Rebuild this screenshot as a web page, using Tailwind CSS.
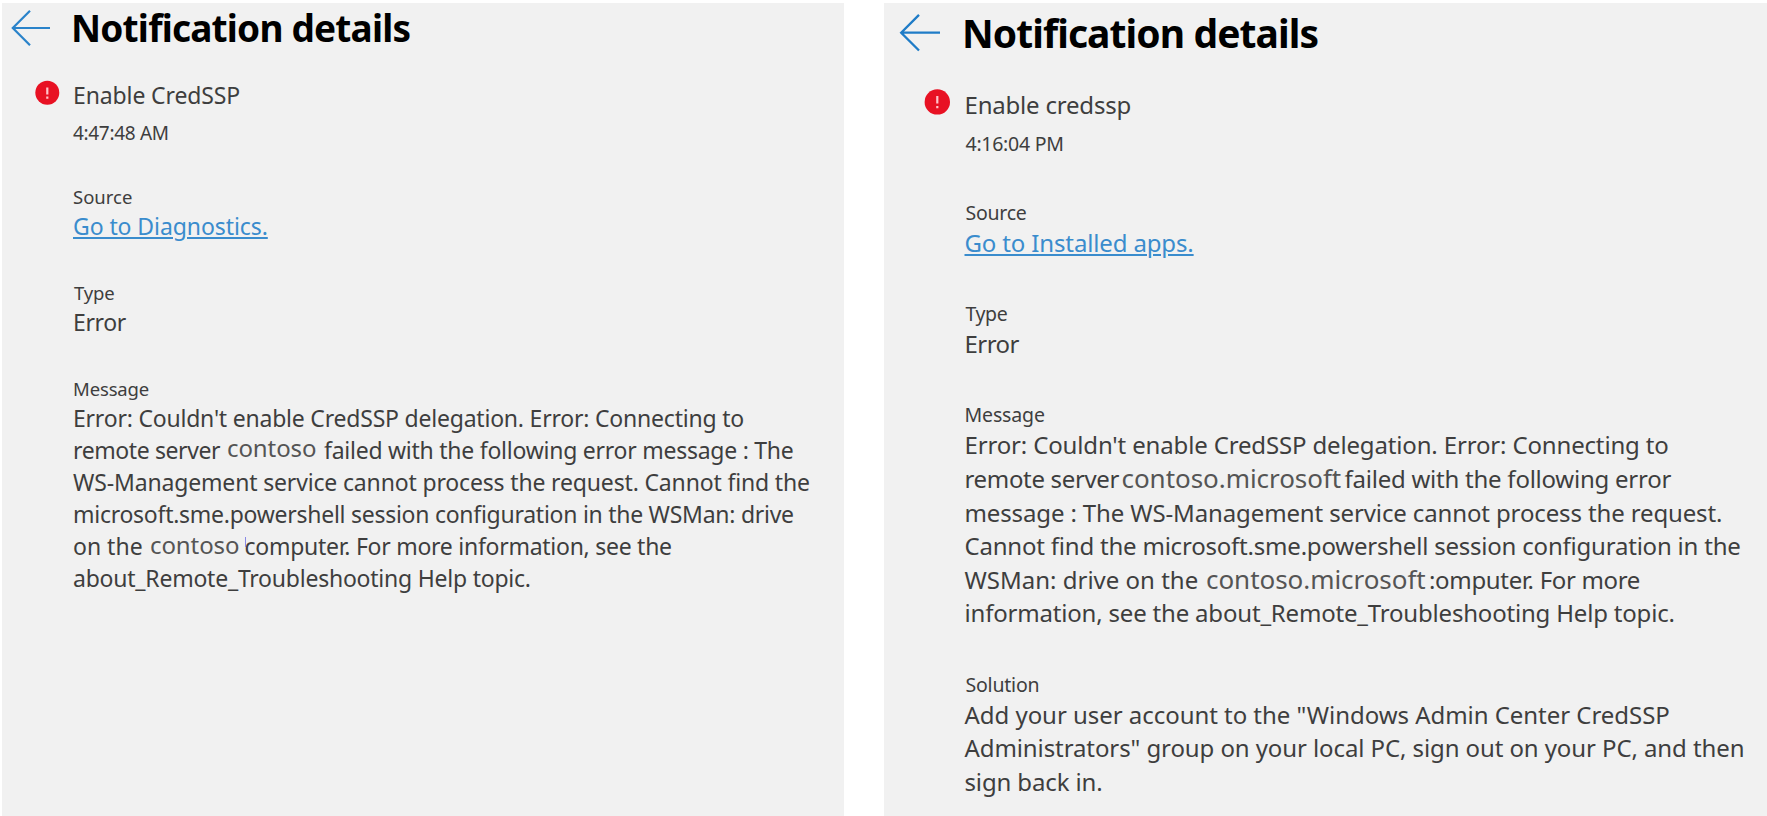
<!DOCTYPE html>
<html lang="en">
<head>
<meta charset="utf-8">
<title>Notification details</title>
<script src="https://cdn.jsdelivr.net/npm/@tailwindcss/browser@4"></script>
</head>
<body class="bg-white">
<main class="flex h-[816px] w-[1767px] justify-between overflow-hidden pl-[2px] pt-[3px] font-['Noto_Sans',sans-serif] text-[#3e3e3e] whitespace-nowrap">

  <section class="h-[813px] w-[842px] bg-[#f1f1f1] pt-px">
    <header class="flex h-12 pl-[9px]">
      <svg class="mt-[5px] h-[38px] w-[42px] shrink-0" viewBox="0 0 42 38" fill="none" stroke="#2a83ca" stroke-width="2.2"><path d="M39 19H2M19 1.800L1.800 19L19 36.200"/></svg>
      <h1 class="ml-[18px] text-[37px] leading-[48px] font-bold tracking-[-0.8px] text-black">Notification details</h1>
    </header>
    <div class="flex pt-[27px] pl-[33px]">
      <svg class="mt-px h-[25px] w-[25px] shrink-0" viewBox="0 0 25 25"><circle cx="12.300" cy="12.700" r="12" fill="#e81123"/><path d="M12.300 7.500v7M12.300 16.500v2.200" stroke="#ffc4ca" stroke-width="2.200"/></svg>
      <div class="ml-[13px] text-[23px] leading-[32px]">
        <p class="tracking-[-0.12px]">Enable CredSSP</p>
        <p class="mt-[9px] text-[19px] leading-[26px] tracking-[-0.32px]">4:47:48 AM</p>
        <dl class="mt-[38px] flex flex-col gap-[38px]">
          <div>
            <dt class="text-[18.5px] leading-[26px]">Source</dt>
            <dd><a class="text-[#3a8ccd] underline decoration-[1.5px] underline-offset-[2px] tracking-[-0.08px]">Go to Diagnostics.</a></dd>
          </div>
          <div>
            <dt class="pl-px text-[18.5px] leading-[26px] tracking-[-0.2px]">Type</dt>
            <dd class="tracking-[-0.4px]">Error</dd>
          </div>
          <div>
            <dt class="text-[18.5px] leading-[26px] tracking-[-0.15px]">Message</dt>
            <dd class="leading-[32.1px]">
              <div class="tracking-[-0.21px]">Error: Couldn't enable CredSSP delegation. Error: Connecting to</div>
              <div class="flex items-start">
                <span class="w-[154px] tracking-[-0.4px]">remote server</span>
                <span class="w-[97px] text-[24px] leading-[28px] text-[#555] tracking-[-0.1px]">contoso</span>
                <span class="tracking-[-0.25px]">failed with the following error message : The</span>
              </div>
              <div class="tracking-[-0.16px]">WS-Management service cannot process the request. Cannot find the</div>
              <div class="tracking-[-0.265px]">microsoft.sme.powershell session configuration in the WSMan: drive</div>
              <div class="flex items-start">
                <span class="w-[77px]">on the</span>
                <span class="w-[94.5px] text-[24px] leading-[29px] text-[#555] tracking-[-0.1px]">contoso</span>
                <span class="relative tracking-[-0.265px]"><i class="absolute top-[7px] left-[0.5px] h-[10px] w-px bg-[#8a8ae6]"></i>computer. For more information, see the</span>
              </div>
              <div class="tracking-[-0.23px]">about_Remote_Troubleshooting Help topic.</div>
            </dd>
          </div>
        </dl>
      </div>
    </div>
  </section>

  <section class="h-[813px] w-[883px] bg-[#f1f1f1] pt-[4px]">
    <header class="flex h-[50px] pl-[14px]">
      <svg class="mt-[6px] h-[40px] w-[42px] shrink-0" viewBox="0 0 42 40" fill="none" stroke="#1f7cc7" stroke-width="2.300"><path d="M42 19.700H3M21 1.900L3.200 19.700L21 37.500"/></svg>
      <h1 class="ml-[22px] pt-px text-[39px] leading-[50px] font-bold tracking-[-0.92px] text-black">Notification details</h1>
    </header>
    <div class="flex pt-[30.6px] pl-[40px]">
      <svg class="mt-[1.400px] h-[26px] w-[27px] shrink-0" viewBox="0 0 27 26"><circle cx="13.300" cy="12.900" r="12.700" fill="#e81123"/><path d="M13.300 7v7.500M13.300 17v2.200" stroke="#ffc4ca" stroke-width="2.200"/></svg>
      <div class="ml-[13.500px] text-[24px] leading-[33.6px]">
        <p class="tracking-[-0.2px]">Enable credssp</p>
        <p class="mt-[9.200px] pl-px text-[19.5px] leading-[27px] tracking-[-0.27px]">4:16:04 PM</p>
        <dl class="mt-[41.300px] flex flex-col gap-[40.6px]">
          <div>
            <dt class="pl-px text-[19.5px] leading-[27px] tracking-[-0.25px]">Source</dt>
            <dd><a class="text-[#3a8ccd] underline decoration-[1.5px] underline-offset-[2px] tracking-[-0.14px]">Go to Installed apps.</a></dd>
          </div>
          <div>
            <dt class="pl-px text-[19.5px] leading-[27px] tracking-[-0.4px]">Type</dt>
            <dd class="tracking-[-0.55px]">Error</dd>
          </div>
          <div>
            <dt class="text-[19.5px] leading-[27px] tracking-[-0.15px]">Message</dt>
            <dd class="pt-[0.4px]">
              <div class="tracking-[-0.155px]">Error: Couldn't enable CredSSP delegation. Error: Connecting to</div>
              <div class="flex items-start">
                <span class="w-[157px] tracking-[-0.33px]">remote server</span>
                <span class="w-[223px] text-[26px] leading-[33px] text-[#555] tracking-[-0.05px]">contoso.microsoft</span>
                <span class="tracking-[-0.24px]">failed with the following error</span>
              </div>
              <div class="tracking-[-0.13px]">message : The WS-Management service cannot process the request.</div>
              <div class="tracking-[-0.21px]">Cannot find the microsoft.sme.powershell session configuration in the</div>
              <div class="flex items-start">
                <span class="w-[241.5px]">WSMan: drive on the</span>
                <span class="w-[223px] text-[26px] leading-[33px] text-[#555] tracking-[-0.05px]">contoso.microsoft</span>
                <span class="tracking-[-0.33px]">:omputer. For more</span>
              </div>
              <div class="tracking-[-0.19px]">information, see the about_Remote_Troubleshooting Help topic.</div>
            </dd>
          </div>
          <div>
            <dt class="pl-px text-[19.5px] leading-[27px] tracking-[-0.2px]">Solution</dt>
            <dd>
              <div class="tracking-[-0.04px]">Add your user account to the "Windows Admin Center CredSSP</div>
              <div class="tracking-[-0.095px]">Administrators" group on your local PC, sign out on your PC, and then</div>
              <div class="tracking-[-0.14px]">sign back in.</div>
            </dd>
          </div>
        </dl>
      </div>
    </div>
  </section>
</main>
</body>
</html>
